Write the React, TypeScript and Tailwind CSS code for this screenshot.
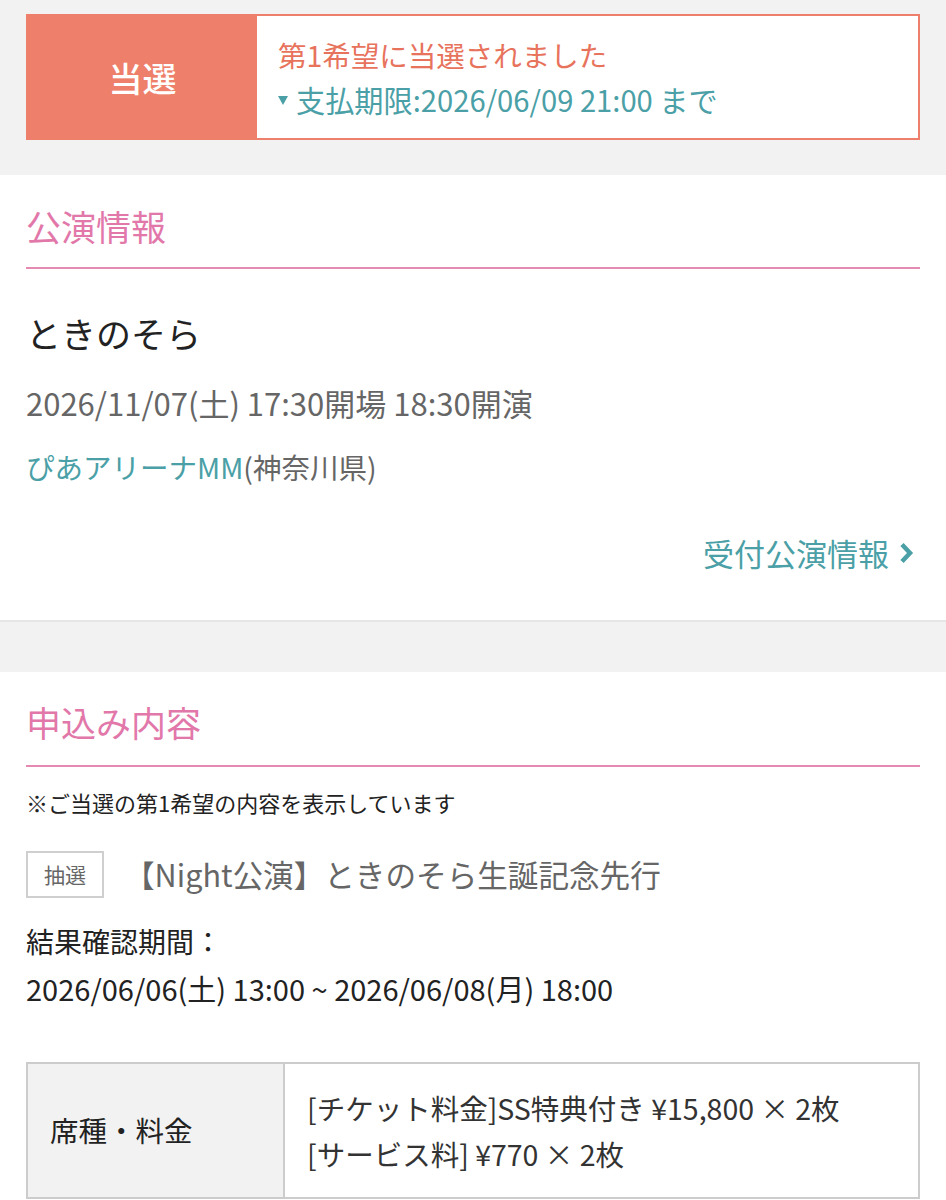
const font = { fontFamily: '"Noto Sans CJK JP", "Noto Sans", sans-serif' };

function SectionHeading({ label, className }: { label: string; className: string }) {
  return (
    <div className={`flex items-center border-b-2 border-[#e58ab3] text-[35px] text-[#e277a9] ${className}`}>
      {label}
    </div>
  );
}

export default function App() {
  return (
    <div className="min-h-screen w-[946px] bg-[#f2f2f2] text-[#222]" style={font}>
      {/* result banner */}
      <div className="px-[26px] pt-[14px] pb-[35px]">
        <div className="flex h-[126px] border-2 border-[#ee7f6a] bg-white">
          <div className="flex w-[229px] items-center justify-center bg-[#ee7f6a] text-[34px] font-medium text-white">
            当選
          </div>
          <div className="flex flex-col justify-center pl-[21px] leading-[45px]">
            <div className="text-[28.5px] text-[#e8735d]">第1希望に当選されました</div>
            <div className="flex items-center gap-[8px] text-[29.2px] text-[#4aa0a6]">
              <svg width="10" height="9" viewBox="0 0 10 9" className="mt-[2px]">
                <polygon points="0,0 10,0 5,9" fill="#4aa0a6" />
              </svg>
              <span>支払期限:2026/06/09 21:00 まで</span>
            </div>
          </div>
        </div>
      </div>

      {/* performance info */}
      <section className="border-b-2 border-[#e6e6e6] bg-white px-[26px] pb-[47px]">
        <SectionHeading label="公演情報" className="h-[94px] pt-[10px]" />
        <div className="mt-[44px] text-[35px] leading-[40px] text-[#222]">ときのそら</div>
        <div className="mt-[30px] text-[31px] leading-[40px] text-[#666]">
          2026/11/07(土) 17:30開場 18:30開演
        </div>
        <div className="mt-[24px] text-[28.5px] leading-[40px] text-[#666]">
          <span className="text-[#4aa0a6]">ぴあアリーナMM</span>(神奈川県)
        </div>
        <div className="mt-[46px] flex items-center justify-end gap-[9px] pr-[6px] text-[31px] leading-[40px] text-[#4aa0a6]">
          <span>受付公演情報</span>
          <svg width="16" height="24" viewBox="0 0 16 24">
            <polyline points="4,3.5 12,12 4,20.5" fill="none" stroke="#4aa0a6" strokeWidth="4.5" />
          </svg>
        </div>
      </section>

      <div className="h-[50px]" />

      {/* application details */}
      <section className="bg-white px-[26px] pb-[20px]">
        <SectionHeading label="申込み内容" className="h-[95px] pt-[7px]" />
        <div className="mt-[21px] text-[22px] leading-[28px] text-[#222]">
          ※ご当選の第1希望の内容を表示しています
        </div>
        <div className="mt-[35px] flex items-center gap-[20px]">
          <div className="flex h-[47px] w-[78px] items-center justify-center border-2 border-[#cfcfcf] text-[21px] text-[#666]">
            抽選
          </div>
          <div className="text-[30.6px] text-[#666]">【Night公演】ときのそら生誕記念先行</div>
        </div>
        <div className="mt-[20px] leading-[47px] text-[#222]">
          <div className="text-[28px]">結果確認期間：</div>
          <div className="text-[29px]">2026/06/06(土) 13:00 ~ 2026/06/08(月) 18:00</div>
        </div>
        <div className="mt-[50px] flex h-[137px] border-2 border-[#cccccc] text-[28.5px]">
          <div className="flex w-[257px] items-center border-r-2 border-[#cccccc] bg-[#f2f2f2] px-[22px] text-[#222]">
            席種・料金
          </div>
          <div className="flex flex-col justify-center px-[22px] leading-[46px] text-[#333]">
            <div>[チケット料金]SS特典付き ¥15,800 × 2枚</div>
            <div>[サービス料] ¥770 × 2枚</div>
          </div>
        </div>
      </section>
    </div>
  );
}
